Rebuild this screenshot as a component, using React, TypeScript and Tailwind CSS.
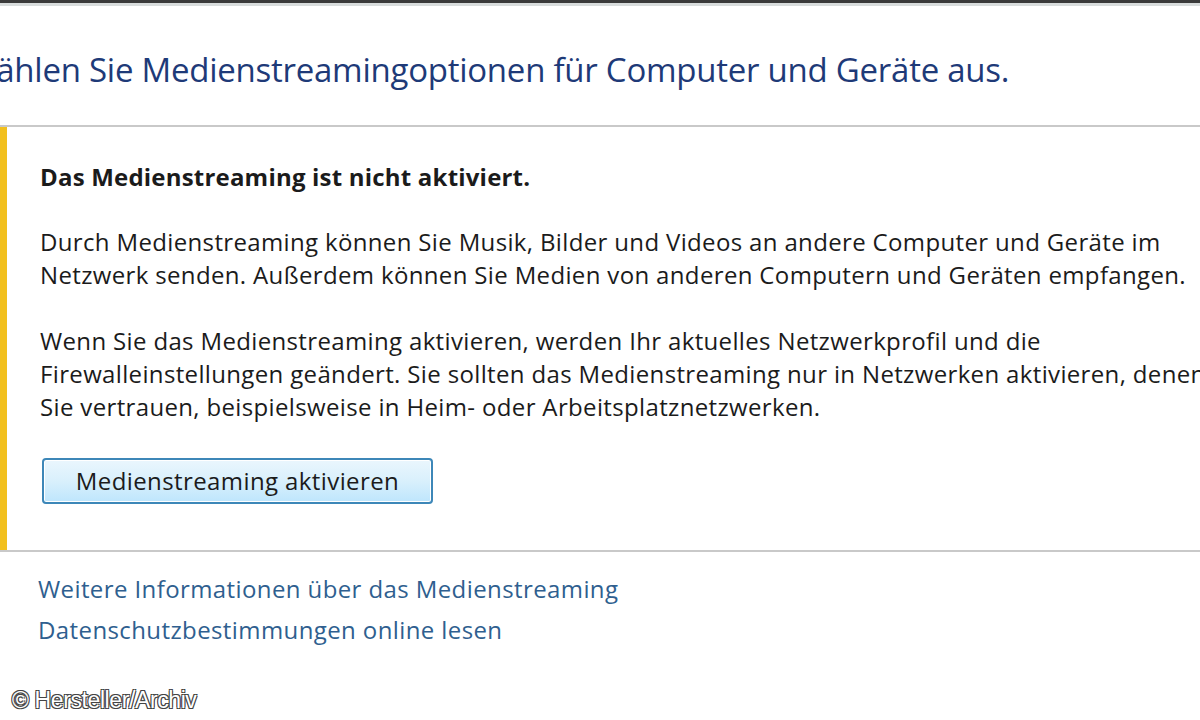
const FONT = "font-['Open_Sans','Noto_Sans',sans-serif]";

function Paragraph({ lines }: { lines: string[] }) {
  return (
    <p className="text-[24px] leading-[33px] text-[#1b1b1b] tracking-[0.35px]">
      {lines.map((l) => (
        <span key={l} className="block whitespace-nowrap">
          {l}
        </span>
      ))}
    </p>
  );
}

export default function App() {
  return (
    <div className={`relative h-[720px] w-[1200px] overflow-hidden bg-white ${FONT}`}>
      <div className="h-[3px] bg-[#3a3a3a]" />
      <div className="h-[3px] bg-[#d8dcdc]" />

      <h1 className="ml-[-34px] mt-[44px] whitespace-nowrap text-[33px] leading-[40px] text-[#1e3a78] tracking-[-0.25px]">
        Wählen Sie Medienstreamingoptionen für Computer und Geräte aus.
      </h1>

      <section className="mt-[35px] flex border-y-2 border-[#c9c9c9]">
        <div className="w-[7px] shrink-0 bg-[#f2c01e]" />
        <div className="flex flex-col pl-[33px] pt-[32px] pb-[46px]">
          <h2 className="text-[24px] font-bold leading-[36px] text-[#1b1b1b] tracking-[0.2px]">
            Das Medienstreaming ist nicht aktiviert.
          </h2>
          <div className="mt-[30px] flex flex-col gap-[33px]">
            <Paragraph
              lines={[
                "Durch Medienstreaming können Sie Musik, Bilder und Videos an andere Computer und Geräte im",
                "Netzwerk senden. Außerdem können Sie Medien von anderen Computern und Geräten empfangen.",
              ]}
            />
            <Paragraph
              lines={[
                "Wenn Sie das Medienstreaming aktivieren, werden Ihr aktuelles Netzwerkprofil und die",
                "Firewalleinstellungen geändert. Sie sollten das Medienstreaming nur in Netzwerken aktivieren, denen",
                "Sie vertrauen, beispielsweise in Heim- oder Arbeitsplatznetzwerken.",
              ]}
            />
          </div>
          <button className="mt-[35px] ml-[2px] h-[46px] w-[391px] rounded-[4px] border-2 border-[#3d87b8] bg-gradient-to-b from-[#eaf6fd] via-[#d9f0fc] to-[#bee6fd] text-[24px] leading-[30px] text-[#1b1b1b] shadow-[inset_0_0_0_1px_#ffffff] tracking-[0.4px]">
            Medienstreaming aktivieren
          </button>
        </div>
      </section>

      <div className="ml-[38px] mt-[21px] flex flex-col gap-[9px] text-[24px] leading-[32px] text-[#2f5f8f] tracking-[0.4px]">
        <a className="cursor-pointer">Weitere Informationen über das Medienstreaming</a>
        <a className="cursor-pointer">Datenschutzbestimmungen online lesen</a>
      </div>

      <div className="absolute left-[12px] top-[683px] font-['Liberation_Sans',sans-serif] text-[23px] tracking-[-0.4px] text-white [text-shadow:_-1px_-1px_0_#444,1px_-1px_0_#444,-1px_1px_0_#444,1px_1px_0_#444]">
        © Hersteller/Archiv
      </div>
    </div>
  );
}
